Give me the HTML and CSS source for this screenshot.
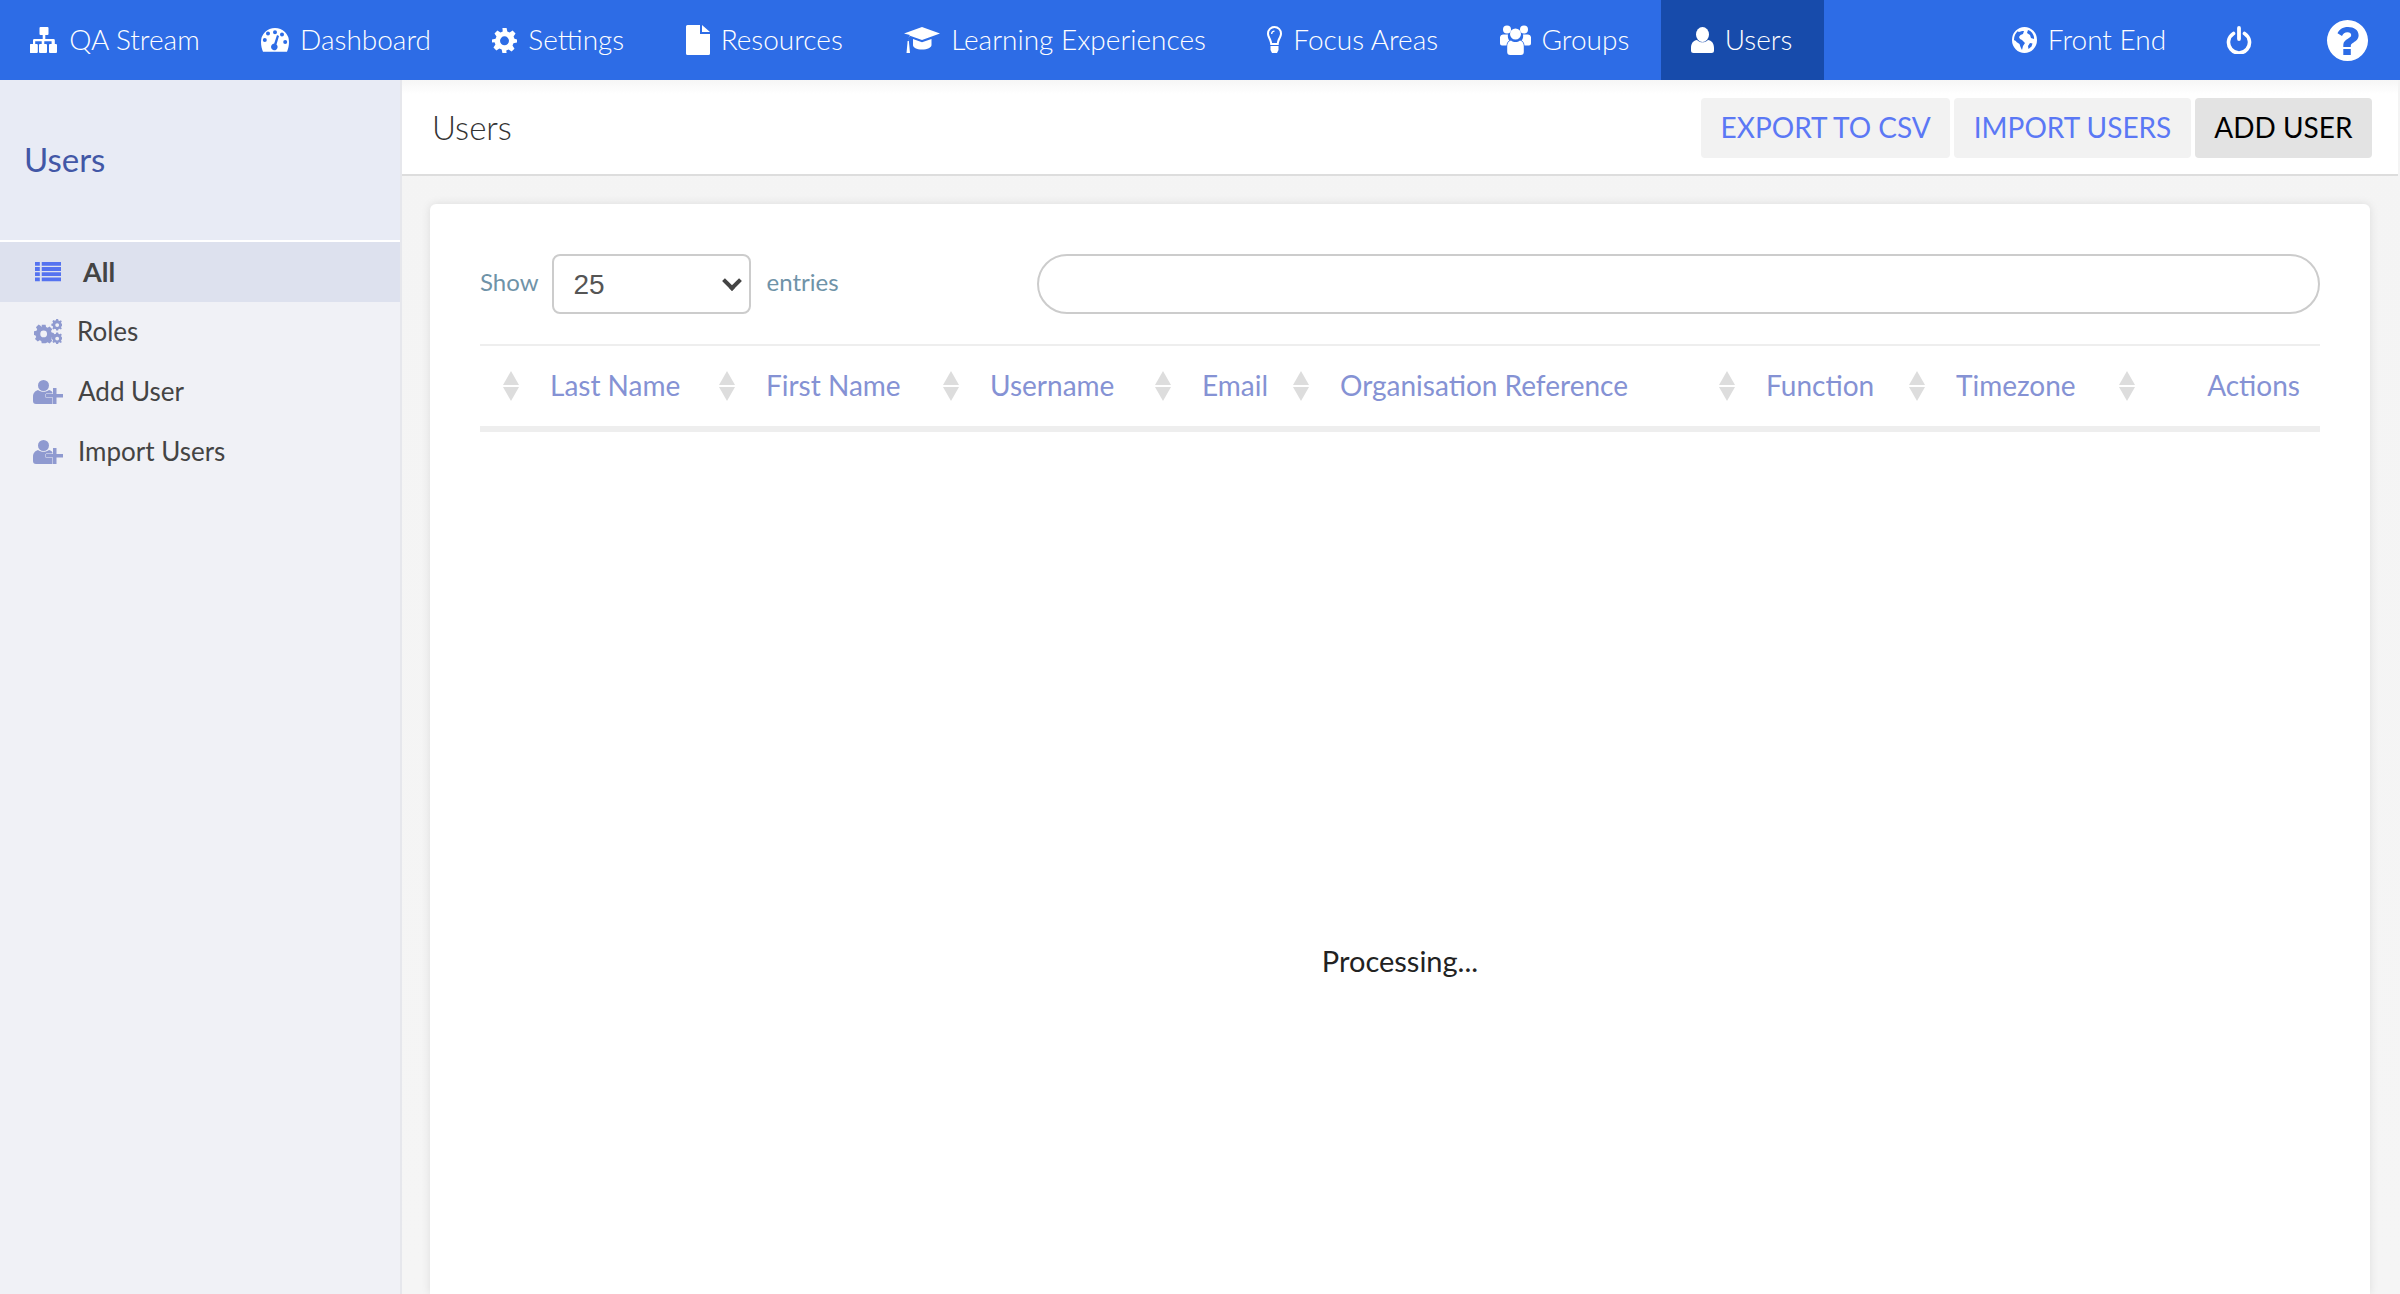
FILE: index.html
```html
<!DOCTYPE html>
<html lang="en">
<head>
<meta charset="utf-8">
<title>Users</title>
<link rel="stylesheet" href="styles.css">
</head>
<body>
<header class="topbar">
  <nav class="nav">
    <a class="nav-item"><svg class="ic w28" viewBox="0 0 28 28"><path d="M10.500 1h7a1 1 0 0 1 1 1v6a1 1 0 0 1-1 1h-2.200v4h8.200a1.300 1.300 0 0 1 1.300 1.300V18h1.200a1 1 0 0 1 1 1v7a1 1 0 0 1-1 1h-6a1 1 0 0 1-1-1v-7a1 1 0 0 1 1-1h1.600v-2.800h-7.300V18h1.700a1 1 0 0 1 1 1v7a1 1 0 0 1-1 1h-6a1 1 0 0 1-1-1v-7a1 1 0 0 1 1-1h1.700v-2.800H5.200V18h1.600a1 1 0 0 1 1 1v7a1 1 0 0 1-1 1h-6a1 1 0 0 1-1-1v-7a1 1 0 0 1 1-1H3v-3.700A1.300 1.300 0 0 1 4.300 13h8.400V9h-2.200a1 1 0 0 1-1-1V2a1 1 0 0 1 1-1z"/></svg><span>QA Stream</span></a>
    <a class="nav-item"><svg class="ic w28" viewBox="0 0 28 28"><path fill-rule="evenodd" d="M14 2a14 14 0 0 1 14 14c0 3.800-.8 7-2 9.800H2C.8 23 0 19.800 0 16A14 14 0 0 1 14 2zm-7 3.500a2 2 0 1 0 0 4 2 2 0 0 0 0-4zm7-1.300a2 2 0 1 0 0 4 2 2 0 0 0 0-4zm7 2.300a2 2 0 1 0 0 4 2 2 0 0 0 0-4zM3.800 12a2 2 0 1 0 0 4 2 2 0 0 0 0-4zm20.400 2a2 2 0 1 0 0 4 2 2 0 0 0 0-4zM16 9l-2.800 8.600a3.300 3.300 0 1 0 2.300.8L18 10z"/></svg><span>Dashboard</span></a>
    <a class="nav-item"><svg class="ic w25" viewBox="0 0 24 24"><path fill-rule="evenodd" d="M10 0h4l.7 3.400 2.200.9 2.900-1.900 2.800 2.800-1.900 2.900.9 2.200L24 11v3l-3.400.7-.9 2.200 1.900 2.900-2.800 2.800-2.900-1.900-2.200.9L14 24h-4l-.7-3.400-2.200-.9-2.900 1.900-2.800-2.800 1.900-2.900-.9-2.200L0 14v-3l3.400-.7.9-2.200-1.900-2.900 2.800-2.800 2.900 1.900 2.200-.9zm2 8a4.300 4.300 0 1 0 0 8.600A4.300 4.300 0 0 0 12 8z"/></svg><span>Settings</span></a>
    <a class="nav-item"><svg class="ic w24" viewBox="0 0 24 30"><path d="M1.500 0H14v9h10v19.500a1.500 1.500 0 0 1-1.500 1.500h-21A1.500 1.500 0 0 1 0 28.500v-27A1.500 1.500 0 0 1 1.500 0zM16 0l8 7h-8z"/></svg><span>Resources</span></a>
    <a class="nav-item"><svg class="ic w36" viewBox="0 0 36 28"><path d="M18 1l18 6.500-18 6.500-12-4.300c-1.200 1.200-1.700 3-1.800 5 .8.400 1 1 .8 1.800l1 10.500H2.500l1-10.500c-.2-.800 0-1.400.8-1.800.1-2.300.6-4.300 1.600-5.800L0 7.500z"/><path d="M9 13l9 3.200L27.500 13v6c0 2.500-4 4.600-9.500 4.600S9 21.500 9 19z"/></svg><span>Learning Experiences</span></a>
    <a class="nav-item"><svg class="ic w15" viewBox="0 0 15 28"><path fill-rule="evenodd" d="M7.500 0A7.500 7.500 0 0 1 15 7.500c0 4-3 6-3.300 11.500H3.300C3 13.500 0 11.500 0 7.500A7.500 7.500 0 0 1 7.500 0zm0 2A5.500 5.500 0 0 0 2 7.500c0 3 2.600 5 3.100 9.500h4.800c.5-4.500 3.100-6.500 3.100-9.500A5.500 5.500 0 0 0 7.500 2zM3.500 20h8v4l-1.500 3H5l-1.500-3z"/><path d="M7.500 4.500v1.300a2.200 2.200 0 0 0-2.200 2.200H4a3.500 3.500 0 0 1 3.500-3.500z"/></svg><span>Focus Areas</span></a>
    <a class="nav-item"><svg class="ic w31" viewBox="0 0 31 30"><circle cx="7" cy="4.500" r="4"/><circle cx="24" cy="4.500" r="4"/><circle cx="15.500" cy="9" r="5.500"/><path d="M0 12a3 3 0 0 1 3-2.500h5c-.4 2.500 0 4.500 1.500 6-1.800 1-2.800 2.500-3 5H2a2 2 0 0 1-2-2zM31 12a3 3 0 0 0-3-2.500h-5c.4 2.500 0 4.500-1.500 6 1.800 1 2.800 2.500 3 5H29a2 2 0 0 0 2-2z"/><path d="M11 15.500c1.300 1 2.800 1.500 4.500 1.500s3.200-.5 4.500-1.500c2.500.5 3.800 2.500 3.800 6V27a3 3 0 0 1-3 3H10.200a3 3 0 0 1-3-3v-5.500c0-3.500 1.300-5.500 3.800-6z"/></svg><span>Groups</span></a>
    <a class="nav-item active"><svg class="ic w23" viewBox="0 0 23 26"><ellipse cx="11.500" cy="7.500" rx="6.500" ry="7.500"/><path d="M6 13c1.500 1.500 3.500 2.300 5.500 2.300S15.500 14.500 17 13c3.500.5 6 3 6 8v2.500a2.500 2.500 0 0 1-2.500 2.500h-18A2.500 2.500 0 0 1 0 23.500V21c0-5 2.500-7.500 6-8z"/></svg><span>Users</span></a>
  </nav>
  <div class="nav-right">
    <a class="nav-item front"><svg class="ic w25" viewBox="0 0 25 26"><path fill-rule="evenodd" d="M12.500 0a12.500 13 0 1 1 0 26 12.500 13 0 0 1 0-26zM6 4C3.500 6 2 9 2 13c1 .5 2 1 2.500 2l3 2 1 3 1.500 3 1-4 2-3-3-3-2-1-1-2 1.500-2 2.500-1 1-3c-2 0-3.500.5-5.500 1zm10-1l-1 3 3 2 1 3 3 1c.5-3-2-8-6-9zm2 13l-2 3 .5 3 3-2.500 1-3z"/></svg><span>Front End</span></a>
    <a class="nav-item"><svg class="ic w26 power" viewBox="0 0 26 28" fill="none"><path d="M7.500 7.500a10.500 10.500 0 1 0 11 0" stroke="#fff" stroke-width="3.600" stroke-linecap="round"/><path d="M13 2v11" stroke="#fff" stroke-width="3.800" stroke-linecap="round"/></svg></a>
    <a class="help"><svg class="ic w41" viewBox="0 0 41 41"><path fill-rule="evenodd" d="M20.500 0a20.500 20.500 0 1 1 0 41 20.500 20.500 0 0 1 0-41zM16.300 29v6h7.500v-6zM21 7c-5.500 0-9 2.500-10.500 6.300l4.500 2.700c1-2.300 2.700-3.700 5.500-3.700 2.300 0 3.700 1.200 3.700 2.800 0 1.700-1.300 2.500-3.300 3.700-2.300 1.400-4.600 3-4.600 6.200V27h7.500v-1.300c0-1.300 1-2 2.800-3.200 2.500-1.500 5-3.300 5-7.200C31.600 10 27 7 21 7z"/></svg></a>
  </div>
</header>
<div class="layout">
  <aside class="sidebar">
    <div class="side-head"><h2 class="side-title">Users</h2></div>
    <ul class="side-list">
      <li class="side-item current"><svg class="sic" viewBox="0 0 27 20"><path d="M0 0h5v4H0zM7 0h20v4H7zM0 5.300h5v4H0zM7 5.300h20v4H7zM0 10.600h5v4H0zM7 10.600h20v4H7zM0 16h5v4H0zM7 16h20v4H7z"/></svg><span>All</span></li>
      <li class="side-item"><svg class="sic tall" viewBox="0 0 29 26"><path fill-rule="evenodd" d="M8 6h4l.5 2.300 1.600.7 2-1.300 2.800 2.800-1.300 2 .7 1.600 2.200.4v4l-2.200.5-.7 1.600 1.300 2-2.800 2.800-2-1.300-1.600.7L12 25H8l-.5-2.200-1.600-.7-2 1.300L1 20.600l1.300-2-.7-1.600L0 16.600v-4l2.600-.4.7-1.600-1.300-2L4.800 5.800l2 1.300L8 8.300zm2 6a3.500 3.500 0 1 0 0 7 3.500 3.500 0 0 0 0-7z"/><path fill-rule="evenodd" d="M23 0h2l.3 1.500 1.200.5 1.300-.8 1 1.200-.8 1.300.5 1.100 1 .3v2l-1 .3-.5 1.200.8 1.300-1 1-1.300-.7-1.200.5-.3 1.300h-2l-.3-1.300-1.200-.5-1.300.8-1.200-1.200.8-1.300-.5-1.200-1.300-.3v-2l1.300-.3.5-1.100-.8-1.300 1.200-1.200 1.300.8 1.200-.5zm1 4.300a2 2 0 1 0 0 4 2 2 0 0 0 0-4zM23 14h2l.3 1.400 1.200.5 1.300-.8 1 1.200-.8 1.300.5 1.100 1 .3v2l-1 .3-.5 1.200.8 1.300-1 1-1.300-.7-1.200.5-.3 1.400h-2l-.3-1.400-1.200-.5-1.300.8-1.200-1.200.8-1.300-.5-1.200-1.300-.3v-2l1.300-.3.5-1.100-.8-1.300 1.200-1.200 1.300.8 1.200-.5zm1 4.300a2 2 0 1 0 0 4 2 2 0 0 0 0-4z"/></svg><span>Roles</span></li>
      <li class="side-item"><svg class="sic wide" viewBox="0 0 30 24"><circle cx="10.500" cy="5.500" r="5.500"/><path d="M5 10c1.500 1.200 3.500 1.800 5.500 1.800S14.500 11.200 16 10c2 .5 3.500 1.500 4 3v11H3a3 3 0 0 1-3-3v-4c0-4 2-6 5-7z"/><path class="plus" d="M20 8h3.500v6H30v3.500h-6.500V24H20v-6.500h-7V14h7z"/></svg><span>Add User</span></li>
      <li class="side-item"><svg class="sic wide" viewBox="0 0 30 24"><circle cx="10.500" cy="5.500" r="5.500"/><path d="M5 10c1.500 1.200 3.500 1.800 5.500 1.800S14.500 11.200 16 10c2 .5 3.500 1.500 4 3v11H3a3 3 0 0 1-3-3v-4c0-4 2-6 5-7z"/><path class="plus" d="M20 8h3.500v6H30v3.500h-6.500V24H20v-6.500h-7V14h7z"/></svg><span>Import Users</span></li>
    </ul>
  </aside>
  <main class="main">
    <div class="titlebar">
      <h1 class="page-title">Users</h1>
      <div class="actions">
        <button class="btn">EXPORT TO CSV</button>
        <button class="btn">IMPORT USERS</button>
        <button class="btn dark">ADD USER</button>
      </div>
    </div>
    <section class="card">
      <div class="controls">
        <label class="length"><span class="len-text">Show</span>
          <span class="select-wrap"><select class="select"><option>25</option><option>50</option><option>100</option></select></span>
          <span class="len-text">entries</span></label>
        <input class="search" type="search" aria-label="Search">
      </div>
      <div class="thead">
        <div class="th"><i class="sort"></i><span>Last Name</span></div>
        <div class="th"><i class="sort"></i><span>First Name</span></div>
        <div class="th"><i class="sort"></i><span>Username</span></div>
        <div class="th"><i class="sort"></i><span>Email</span></div>
        <div class="th"><i class="sort"></i><span>Organisation Reference</span></div>
        <div class="th"><i class="sort"></i><span>Function</span></div>
        <div class="th"><i class="sort"></i><span>Timezone</span></div>
        <div class="th last"><i class="sort"></i><span>Actions</span></div>
      </div>
      <div class="processing">Processing...</div>
    </section>
  </main>
</div>
</body>
</html>
```
FILE: styles.css
```css
* { box-sizing: border-box; }
html, body { margin: 0; height: 100%; overflow: hidden; }
body { font-family: "Lato", "Liberation Sans", sans-serif; background: #f5f5f5; color: #222; display: flex; flex-direction: column; }

.topbar { height: 80px; flex: none; background: #2d6ce6; display: flex; justify-content: space-between; color: #fff; position: relative; z-index: 2; }
.nav, .nav-right { display: flex; align-items: stretch; }
.nav-item { display: flex; align-items: center; gap: 11px; padding: 0 31.2px 0 30.2px; font-size: 28px; font-weight: 300; }
.nav-item span { margin-bottom: 2px; }
.nav-item.active { background: #174bab; }
.nav-item.front { padding-right: 29.5px; }
.help { display: flex; align-items: center; margin: 0 32px 0 44px; }
.ic { fill: #fff; display: block; height: auto; flex: none; }
.w15 { width: 15px; } .w23 { width: 23px; } .w24 { width: 24px; } .w25 { width: 25px; }
.w26 { width: 26px; } .w28 { width: 28px; } .w31 { width: 31px; } .w36 { width: 36px; } .w41 { width: 41px; }
.power { fill: none; }

.layout { flex: 1; display: flex; min-height: 0; }
.sidebar { width: 402px; flex: none; background: #f0f1f6; border-right: 2px solid #e6e7ec; }
.side-head { height: 162px; background: #e8ebf5; padding: 55px 24px 0; border-bottom: 2px solid #fff; }
.side-title { margin: 0; font-size: 33px; font-weight: 400; line-height: 48px; color: #4257a6; }
.side-list { list-style: none; margin: 0; padding: 0; }
.side-item { height: 60px; display: flex; align-items: center; gap: 15px; padding-left: 33px; font-size: 26px; color: #444; }
.side-item span { margin-bottom: 2px; }
.side-item.current { background: #dde1ee; font-weight: 700; font-size: 27px; gap: 22px; padding-left: 35px; }
.sic { width: 29px; height: auto; fill: #8f9ad0; flex: none; }
.current .sic { width: 26px; fill: #5573f0; }
.sic.tall { width: 28px; margin-left: 1px; }
.sic.wide { width: 30px; }
.plus { stroke: #f0f1f6; stroke-width: 1px; paint-order: stroke; }

.main { flex: 1; min-width: 0; display: flex; flex-direction: column; padding-right: 2px; background: linear-gradient(#f4f4f4, #f5f5f5); }
.titlebar { height: 96px; flex: none; background: linear-gradient(#f6f6f6, #fff 14px); border-bottom: 2px solid #ddd; display: flex; align-items: center; justify-content: space-between; padding: 0 26px 0 30px; }
.page-title { margin: 0; font-size: 33px; font-weight: 300; color: #333; }
.actions { display: flex; gap: 4px; padding-top: 2px; }
.btn { height: 60px; border: 0; border-radius: 4px; background: #f2f2f2; color: #5b78f5; font: 400 28px "Lato", sans-serif; padding: 0 19.5px 2px; }
.btn.dark { background: #e3e3e3; color: #000; }

.card { flex: 1; margin: 28px 28px 0 28px; background: #fff; border-radius: 6px 6px 0 0; box-shadow: 0 0 10px rgba(0,0,0,.1); padding: 50px 50px 0; }
.controls { display: flex; justify-content: space-between; align-items: center; height: 60px; }
.length { display: flex; align-items: center; gap: 15px; font-size: 24px; color: #6f93a8; }
.len-text { margin-bottom: 6px; }
.select-wrap { position: relative; display: block; margin-left: -2px; margin-right: 1px; }
.select-wrap::after { content: ""; position: absolute; right: 12px; top: 20px; width: 10px; height: 10px; border-right: 4px solid #444; border-bottom: 4px solid #444; transform: rotate(45deg); pointer-events: none; }
.select { display: block; appearance: none; width: 199px; height: 60px; border: 2px solid #ccc; border-radius: 8px; background: #fff; font: 28px "Liberation Sans", sans-serif; color: #555; padding-left: 20px; }
.search { width: 1283px; height: 60px; border: 2px solid #ccc; border-radius: 30px; background: #fff; outline: 0; appearance: none; }

.thead { margin-top: 30px; height: 88px; border-top: 2px solid #eee; border-bottom: 6px solid #eee; display: grid; grid-template-columns: 216px 224px 212px 138px 426px 190px 210px 1fr; padding-left: 23px; }
.th { display: flex; align-items: center; gap: 31px; font-size: 28px; color: #8592d4; }
.th span { margin-bottom: 3px; }
.th.last { justify-content: space-between; padding-right: 20px; }
.sort { position: relative; width: 16px; height: 30px; flex: none; }
.sort::before, .sort::after { content: ""; position: absolute; left: 0; border-left: 8px solid transparent; border-right: 8px solid transparent; }
.sort::before { top: 0; border-bottom: 14px solid #ddd; }
.sort::after { bottom: 0; border-top: 14px solid #ddd; }

.processing { margin-top: 511px; text-align: center; font-size: 29px; color: #222; }
```
